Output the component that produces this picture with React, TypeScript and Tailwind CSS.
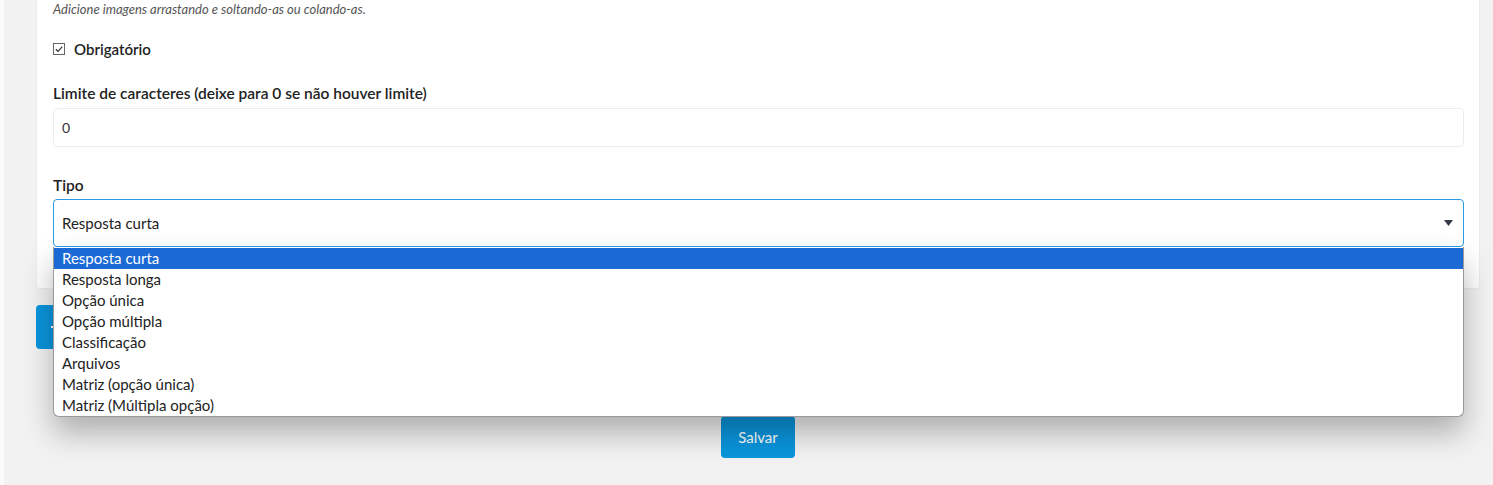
import { useState } from "react";

const tipos = [
  "Resposta curta",
  "Resposta longa",
  "Opção única",
  "Opção múltipla",
  "Classificação",
  "Arquivos",
  "Matriz (opção única)",
  "Matriz (Múltipla opção)",
];

const font = { fontFamily: "Lato, 'Noto Sans', sans-serif" };

export default function App() {
  const [tipo] = useState(tipos[0]);
  const [obrigatorio] = useState(true);

  return (
    <div
      style={font}
      className="min-h-[485px] w-full bg-[#f2f2f2] border-l-4 border-[#fafafa] text-[#333]"
    >
      <div className="ml-8 w-[1444px]">
        {/* Card */}
        <div className="bg-white rounded-b border border-t-0 border-[#ececec] px-[16px] pb-[41px]">
          <p className="text-[13px] italic text-[#555] pt-[1px] leading-[16px]">
            Adicione imagens arrastando e soltando-as ou colando-as.
          </p>

          <label className="flex items-center gap-[9px] mt-[23px] h-[18px]">
            <span className="w-[12px] h-[12px] border border-[#666] flex items-center justify-center bg-white">
              {obrigatorio && (
                <svg width="10" height="10" viewBox="0 0 10 10">
                  <path d="M1.8 5.2 L4 7.3 L8.3 2.6" fill="none" stroke="#333" strokeWidth="1.2" />
                </svg>
              )}
            </span>
            <span className="text-[15px] font-semibold text-[#222]">Obrigatório</span>
          </label>

          <div className="mt-[25px]">
            <p className="text-[15.5px] font-semibold text-[#222] leading-[20px]">
              Limite de caracteres (deixe para 0 se não houver limite)
            </p>
            <div className="mt-[5px] h-[39px] w-[1411px] rounded border border-[#ececec] flex items-center px-[8px] text-[14px] text-[#333]">
              0
            </div>
          </div>

          <div className="mt-[28px] relative">
            <p className="text-[15.5px] font-semibold text-[#222] leading-[20px]">Tipo</p>
            <div className="mt-[4px] h-[48px] w-[1411px] rounded border border-[#2a9ae6] flex items-center justify-between pl-[8px] pr-[10px] text-[15px] text-[#222]">
              <span>{tipo}</span>
              <svg width="9" height="6" viewBox="0 0 9 6">
                <path d="M0 0 H9 L4.5 6 Z" fill="#333a45" />
              </svg>
            </div>

            {/* Open option list */}
            <ul className="absolute left-0 top-[72px] z-10 w-[1411px] bg-white border border-t-0 border-[#9a9a9a] rounded-b-[6px] shadow-[0_16px_30px_rgba(0,0,0,0.28)] text-[15px] leading-[21px] pt-[1px]">
              {tipos.map((t) => (
                <li
                  key={t}
                  className={
                    t === tipo
                      ? "bg-[#1a69d4] text-white px-[8px] h-[21px]"
                      : "text-[#222] px-[8px] h-[21px]"
                  }
                >
                  {t}
                </li>
              ))}
            </ul>
          </div>
        </div>

        <div className="mt-[16px] flex">
          <button className="h-[44px] rounded bg-[#0a95dc] text-white pl-[14px] pr-[16px] flex items-center gap-2">
            <svg width="12" height="12" viewBox="0 0 12 12">
              <path d="M6 1 V11 M1 6 H11" stroke="#fff" strokeWidth="2" />
            </svg>
            <span className="w-[120px]" />
          </button>
        </div>

        <div className="mt-[67px] flex justify-center">
          <button className="h-[42px] w-[74px] rounded bg-[#0a95dc] text-white text-[15px]">
            Salvar
          </button>
        </div>
      </div>
    </div>
  );
}
